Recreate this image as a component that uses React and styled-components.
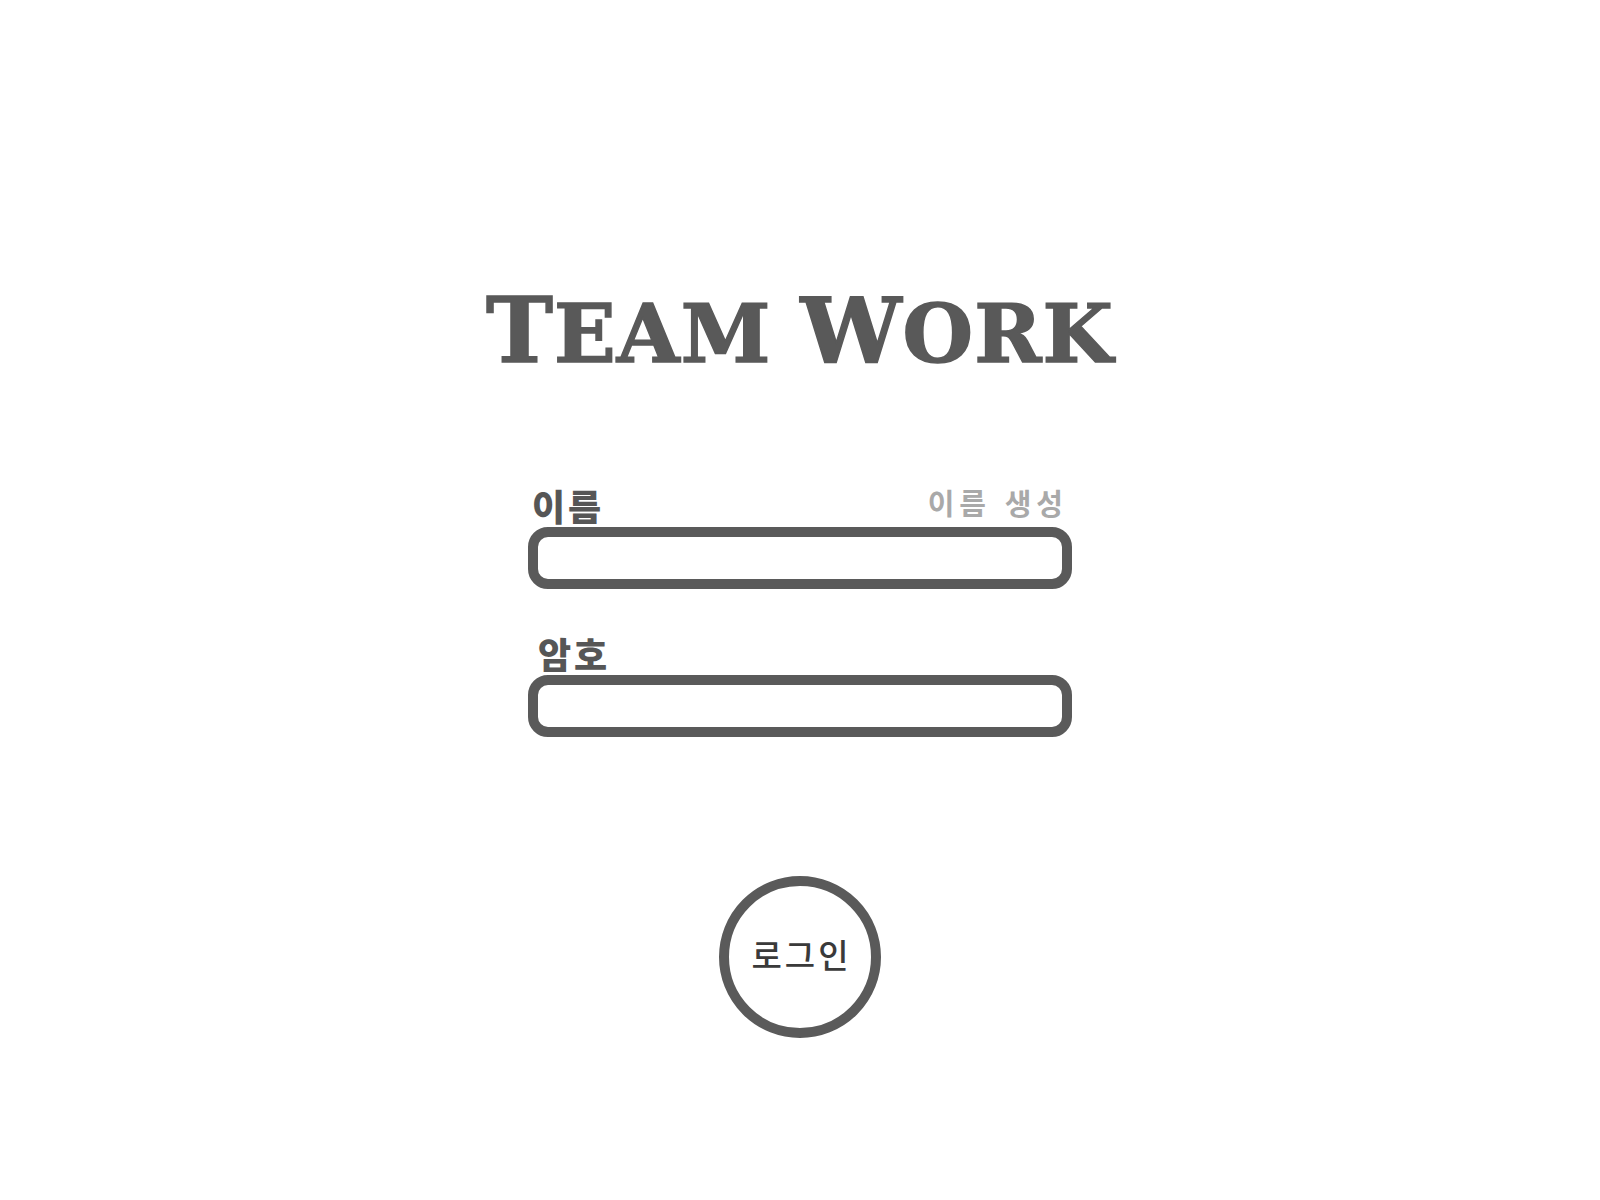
import styled, { createGlobalStyle } from "styled-components";

const Global = createGlobalStyle`
  html, body {
    margin: 0;
    padding: 0;
    background: #ffffff;
  }
  body {
    font-family: "Noto Sans CJK KR", "Noto Sans", sans-serif;
  }
`;

const Page = styled.div`
  width: 1600px;
  min-height: 1200px;
  display: flex;
  flex-direction: column;
  align-items: center;
  padding-top: 285px;
  box-sizing: border-box;
`;

const Title = styled.h1`
  margin: 0;
  font-family: "DejaVu Serif", "Liberation Serif", serif;
  font-size: 90px;
  font-weight: bold;
  color: #595959;
  line-height: 1;
  letter-spacing: 1px;
  white-space: nowrap;
  -webkit-text-stroke: 1.5px #595959;
`;

const Big = styled.span`
  font-size: 90px;
`;

const Small = styled.span`
  font-size: 81px;
`;

const Form = styled.div`
  width: 544px;
  margin-top: 112px;
  display: flex;
  flex-direction: column;
  gap: 46px;
`;

const Field = styled.div`
  display: flex;
  flex-direction: column;
  gap: 4px;
`;

const LabelRow = styled.div`
  display: flex;
  justify-content: space-between;
  align-items: flex-start;
  padding: 0 4px 0 ${(p) => p.$indent || 5}px;
`;

const Label = styled.label`
  font-size: 36px;
  font-weight: 900;
  line-height: 1;
  letter-spacing: 3px;
  color: #565656;
`;

const Generate = styled.button`
  border: none;
  background: none;
  padding: 0;
  margin-top: 1px;
  font-family: "Noto Sans CJK KR", sans-serif;
  font-size: 29px;
  font-weight: 700;
  line-height: 1;
  letter-spacing: 5px;
  word-spacing: 2px;
  color: #a9a9a9;
  cursor: pointer;
`;

const Input = styled.input`
  box-sizing: border-box;
  width: 100%;
  height: 62px;
  border: 10px solid #5a5a5a;
  border-radius: 20px;
  background: #fff;
  outline: none;
  font-size: 22px;
  padding: 0 12px;
`;

const LoginButton = styled.button`
  margin-top: 139px;
  width: 162px;
  height: 162px;
  box-sizing: border-box;
  border: 10px solid #5a5a5a;
  border-radius: 50%;
  background: #fff;
  font-family: "Noto Sans CJK KR", sans-serif;
  font-size: 33px;
  font-weight: 500;
  letter-spacing: 3px;
  color: #3a3a3a;
  cursor: pointer;
  padding: 0 0 6px 3px;
`;

export default function App() {
  return (
    <Page>
      <Global />
      <Title>
        <Big>T</Big>
        <Small>EAM </Small>
        <Big>W</Big>
        <Small>ORK</Small>
      </Title>
      <Form>
        <Field>
          <LabelRow $indent={4}>
            <Label>이름</Label>
            <Generate type="button">이름 생성</Generate>
          </LabelRow>
          <Input type="text" />
        </Field>
        <Field>
          <LabelRow $indent={10}>
            <Label>암호</Label>
          </LabelRow>
          <Input type="password" />
        </Field>
      </Form>
      <LoginButton type="button">로그인</LoginButton>
    </Page>
  );
}
